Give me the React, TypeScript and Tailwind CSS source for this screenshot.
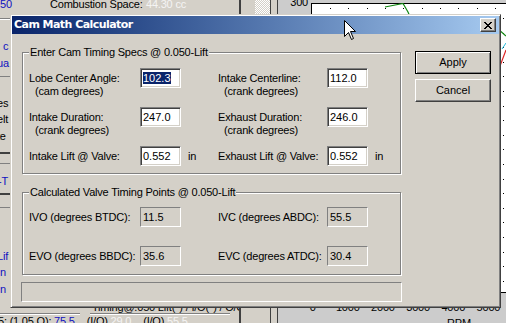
import React from "react";

function Field({ value, selected }: { value: string; selected?: boolean }) {
  return (
    <div className="w-[41px] h-[20px] shrink-0 bg-white border border-t-[#808080] border-l-[#808080] border-r-white border-b-white shadow-[inset_1px_1px_0_#404040,inset_-1px_-1px_0_#d4d0c8] pl-[2px] pt-[1px] leading-[16px] whitespace-nowrap tracking-normal">
      {selected ? <span className="bg-[#0a246a] text-white">{value}</span> : value}
    </div>
  );
}

function ReadField({ value }: { value: string }) {
  return (
    <div className="w-[41px] h-[20px] shrink-0 border border-t-[#808080] border-l-[#808080] border-r-white border-b-white pl-[2px] pt-[1px] leading-[16px] tracking-normal">
      {value}
    </div>
  );
}

function InputRow({
  l1,
  l2,
  v1,
  sel,
  r1,
  r2,
  v2,
  unit,
  last,
}: {
  l1: string;
  l2?: string;
  v1: string;
  sel?: boolean;
  r1: string;
  r2?: string;
  v2: string;
  unit?: boolean;
  last?: boolean;
}) {
  return (
    <div className={last ? "flex h-[20px]" : "flex h-[39px]"}>
      <div className="w-[111px] pt-[4px] leading-[13px] whitespace-nowrap">
        <div>{l1}</div>
        {l2 && <div className="pl-[6px]">{l2}</div>}
      </div>
      <Field value={v1} selected={sel} />
      <div className="w-[37px] pl-[7px] pt-[4px] leading-[13px]">{unit ? "in" : ""}</div>
      <div className="w-[109px] pt-[4px] leading-[13px] whitespace-nowrap">
        <div>{r1}</div>
        {r2 && <div className="pl-[6px]">{r2}</div>}
      </div>
      <Field value={v2} />
      <div className="pl-[7px] pt-[4px] leading-[13px]">{unit ? "in" : ""}</div>
    </div>
  );
}

function CalcRow({ l, v1, r, v2, last }: { l: string; v1: string; r: string; v2: string; last?: boolean }) {
  return (
    <div className={last ? "flex h-[20px]" : "flex h-[39px]"}>
      <div className="w-[111px] pt-[4px] leading-[13px] whitespace-nowrap">{l}</div>
      <ReadField value={v1} />
      <div className="w-[37px]" />
      <div className="w-[109px] pt-[4px] leading-[13px] whitespace-nowrap">{r}</div>
      <ReadField value={v2} />
    </div>
  );
}

function Dialog() {
  return (
    <div className="absolute left-[10px] top-[14px] w-[491px] h-[294px] bg-[#d4d0c8] border border-t-[#d4d0c8] border-l-[#d4d0c8] border-r-[#404040] border-b-[#404040] shadow-[inset_1px_1px_0_#ffffff,inset_-1px_-1px_0_#808080] p-[1px] flex flex-col">
      {/* title bar */}
      <div className="h-[18px] shrink-0 flex items-start justify-between bg-linear-to-r from-[#0a246a] to-[#a6caf0] pl-[2px] pr-[3px]">
        <span className="font-['DejaVu_Sans',Verdana,sans-serif] font-bold text-[11px] leading-[18px] tracking-[-0.55px] text-white whitespace-nowrap">
          Cam Math Calculator
        </span>
        <div className="mt-[2px] w-[16px] h-[14px] bg-[#d4d0c8] border border-t-white border-l-white border-r-[#404040] border-b-[#404040] shadow-[inset_-1px_-1px_0_#808080] flex items-center justify-center">
          <svg width="8" height="7" viewBox="0 0 8 7" shapeRendering="crispEdges" className="ml-[-1px]">
            <path
              d="M0 0h2v1H0zM6 0h2v1H6zM1 1h2v1H1zM5 1h2v1H5zM2 2h4v1H2zM3 3h2v1H3zM2 4h4v1H2zM1 5h2v1H1zM5 5h2v1H5zM0 6h2v1H0zM6 6h2v1H6z"
              fill="#000"
            />
          </svg>
        </div>
      </div>

      {/* content */}
      <div className="flex text-[11px] tracking-[-0.2px] text-black">
        <div className="flex flex-col pl-[10px] pt-[18px]">
          {/* group 1 */}
          <div className="relative w-[379px] h-[122px] border border-[#808080] shadow-[inset_1px_1px_0_#ffffff,1px_1px_0_#ffffff] pt-[15px] pl-[6px]">
            <div className="absolute -top-[7px] left-[6px] px-[1px] bg-[#d4d0c8] leading-[13px] whitespace-nowrap">
              Enter Cam Timing Specs @ 0.050-Lift
            </div>
            <InputRow l1="Lobe Center Angle:" l2="(cam degrees)" v1="102.3" sel r1="Intake Centerline:" r2="(crank degrees)" v2="112.0" />
            <InputRow l1="Intake Duration:" l2="(crank degrees)" v1="247.0" r1="Exhaust Duration:" r2="(crank degrees)" v2="246.0" />
            <InputRow l1="Intake Lift @ Valve:" v1="0.552" r1="Exhaust Lift @ Valve:" v2="0.552" unit last />
          </div>

          {/* group 2 */}
          <div className="relative mt-[18px] w-[379px] h-[83px] border border-[#808080] shadow-[inset_1px_1px_0_#ffffff,1px_1px_0_#ffffff] pt-[14px] pl-[6px]">
            <div className="absolute -top-[7px] left-[6px] px-[1px] bg-[#d4d0c8] leading-[13px] whitespace-nowrap">
              Calculated Valve Timing Points @ 0.050-Lift
            </div>
            <CalcRow l="IVO (degrees BTDC):" v1="11.5" r="IVC (degrees ABDC):" v2="55.5" />
            <CalcRow l="EVO (degrees BBDC):" v1="35.6" r="EVC (degrees ATDC):" v2="30.4" last />
          </div>

          {/* status box */}
          <div className="mt-[7px] -ml-[1px] w-[381px] h-[20px] border border-t-[#808080] border-l-[#808080] border-r-white border-b-white" />
        </div>

        {/* buttons */}
        <div className="flex flex-col pt-[17px] ml-[13px]">
          <div className="w-[76px] h-[23px] border border-black shadow-[inset_1px_1px_0_#ffffff,inset_-1px_-1px_0_#808080] flex items-center justify-center leading-[13px] tracking-normal">
            Apply
          </div>
          <div className="mt-[5px] w-[76px] h-[23px] border border-t-white border-l-white border-r-[#404040] border-b-[#404040] shadow-[inset_-1px_-1px_0_#808080] flex items-center justify-center leading-[13px] tracking-normal">
            Cancel
          </div>
        </div>
      </div>
    </div>
  );
}

function Chart() {
  const topDots = Array.from({ length: 10 }, (_, i) => 19 + i * 18.35);
  const rightDots = Array.from({ length: 19 }, (_, i) => 15 + i * 14.6);
  return (
    <svg width="195" height="290" viewBox="0 0 195 290" className="block">
      <rect x="0" y="0" width="195" height="290" fill="#ffffff" />
      <line x1="0.5" y1="0" x2="0.5" y2="290" stroke="#000" />
      <line x1="0" y1="0.5" x2="195" y2="0.5" stroke="#000" />
      <line x1="0" y1="289.5" x2="195" y2="289.5" stroke="#000" />
      {topDots.map((x, i) => (
        <rect key={"t" + i} x={Math.round(x)} y="5" width="1" height="1" fill="#000" />
      ))}
      {rightDots.map((y, i) => (
        <rect key={"r" + i} x="192" y={Math.round(y)} width="1" height="1" fill="#000" />
      ))}
      <polyline points="74,4 92,0.5 97,9 110,40" fill="none" stroke="#118811" strokeWidth="1.2" />
      <polyline points="186,25 195,33" fill="none" stroke="#118811" strokeWidth="1.2" />
      <polyline points="189,63 195,47" fill="none" stroke="#dd2222" strokeWidth="1.2" />
      <polyline points="191,46 195,40" fill="none" stroke="#22bbdd" strokeWidth="1" />
    </svg>
  );
}

function Background() {
  return (
    <div className="flex h-full text-[11px] leading-[11px] tracking-[-0.2px] whitespace-nowrap">
      {/* left application panel */}
      <div className="w-[239px] flex flex-col overflow-hidden">
        <div className="h-[14px] shrink-0 flex">
          <span className="w-[50px] -mt-[1px] text-[#1010c0]">50</span>
          <span className="w-[96px] -mt-[1px]">Combustion Space:</span>
          <span className="-mt-[1px] text-[#f4f4f4]">44.30 cc</span>
        </div>
        <div className="h-[4px] shrink-0" />
        <div className="h-[2px] shrink-0 border-t border-t-[#808080] border-b border-b-white" />
        <div className="h-[21px] shrink-0" />
        <div className="h-[11px] shrink-0 pl-[3px] text-[#1010c0]">c</div>
        <div className="h-[6px] shrink-0" />
        <div className="h-[11px] shrink-0 -ml-[3px] text-[#1010c0]">ua</div>
        <div className="h-[7px] shrink-0" />
        <div className="h-[1px] shrink-0 bg-[#808080]" />
        <div className="h-[21px] shrink-0" />
        <div className="h-[11px] shrink-0 -ml-[3px]">es</div>
        <div className="h-[5px] shrink-0" />
        <div className="h-[11px] shrink-0 -ml-[3px]">elt</div>
        <div className="h-[6px] shrink-0" />
        <div className="h-[11px] shrink-0 -ml-[3px]">te</div>
        <div className="h-[10px] shrink-0" />
        <div className="h-[2px] shrink-0 bg-[#404040]" />
        <div className="h-[9px] shrink-0" />
        <div className="h-[1px] shrink-0 bg-[#808080]" />
        <div className="h-[12px] shrink-0" />
        <div className="h-[11px] shrink-0 -ml-[2px] text-[#1010c0]">-T</div>
        <div className="h-[6px] shrink-0" />
        <div className="h-[2px] shrink-0 bg-[#404040]" />
        <div className="h-[12px] shrink-0" />
        <div className="h-[1px] shrink-0 bg-[#808080]" />
        <div className="h-[43px] shrink-0" />
        <div className="h-[11px] shrink-0 -ml-[3px] text-[#1010c0]">Lif</div>
        <div className="h-[5px] shrink-0" />
        <div className="h-[11px] shrink-0 text-[#1010c0]">n</div>
        <div className="h-[6px] shrink-0" />
        <div className="h-[11px] shrink-0 text-[#1010c0]">n</div>
        <div className="h-[7px] shrink-0" />
        <div className="h-[11px] shrink-0 pl-[92px]">Timing@.050 Lift(°) / I/O(°) / O/C</div>
        <div className="h-[2px] shrink-0 flex">
          <div className="w-[80px] border-t border-t-[#808080] border-b border-b-white" />
          <div className="w-[10px]" />
          <div className="w-[140px] border-t border-t-[#808080] border-b border-b-white" />
        </div>
        <div className="h-[1px] shrink-0" />
        <div className="h-[11px] shrink-0 -ml-[2px]">
          5: (1.05 O): <span className="text-[#1010c0]">75.5</span>
          <span className="pl-[12px]">(I/O)</span> <span className="text-[#f4f4f4]">29.0</span>
          <span className="pl-[12px]">(I/O)</span> <span className="text-[#f4f4f4]">55.5</span>
        </div>
      </div>

      {/* divider / scrollbar strip */}
      <div className="w-[2px] bg-[#404040]" />
      <div className="w-[14px]" />
      <div className="w-[15px] flex flex-col">
        <div className="h-[14px] bg-[image:repeating-conic-gradient(#ffffff_0%_25%,#d4d0c8_0%_50%)] bg-[length:2px_2px]" />
      </div>
      <div className="w-[1px] bg-[#404040]" />
      <div className="w-[6px]" />
      <div className="w-[1px] bg-[#404040]" />

      {/* chart panel */}
      <div className="flex-1 flex bg-[#cccccc]">
        <div className="w-[33px] flex flex-col items-end pr-[3px]">
          <span className="-mt-[3px]">300</span>
        </div>
        <div className="w-[195px] flex flex-col">
          <div className="mt-[3px]">
            <Chart />
          </div>
          <div className="mt-[9px] -ml-[16px] flex h-[11px]">
            <span className="w-[36px] text-center">0</span>
            <span className="w-[36px] text-center">1000</span>
            <span className="w-[36px] text-center">2000</span>
            <span className="w-[36px] text-center">3000</span>
            <span className="w-[36px] text-center">4000</span>
            <span className="w-[36px] text-center">5000</span>
          </div>
          <div className="mt-[5px] pl-[136px]">RPM</div>
        </div>
      </div>
    </div>
  );
}

function Cursor() {
  return (
    <svg
      width="13"
      height="21"
      viewBox="0 0 13 21"
      className="absolute left-[344px] top-[20px] pointer-events-none"
    >
      <polygon
        points="0.5,0.5 0.5,16.5 4.5,12.5 7.5,19.5 9.5,18.5 6.5,11.5 11.5,11.5"
        fill="#ffffff"
        stroke="#000000"
        strokeWidth="1"
        strokeLinejoin="miter"
      />
    </svg>
  );
}

export default function App() {
  return (
    <div className="relative w-[506px] h-[323px] overflow-hidden bg-[#d4d0c8] text-black font-['Liberation_Sans',Arial,sans-serif]">
      <Background />
      <Dialog />
      <Cursor />
    </div>
  );
}
